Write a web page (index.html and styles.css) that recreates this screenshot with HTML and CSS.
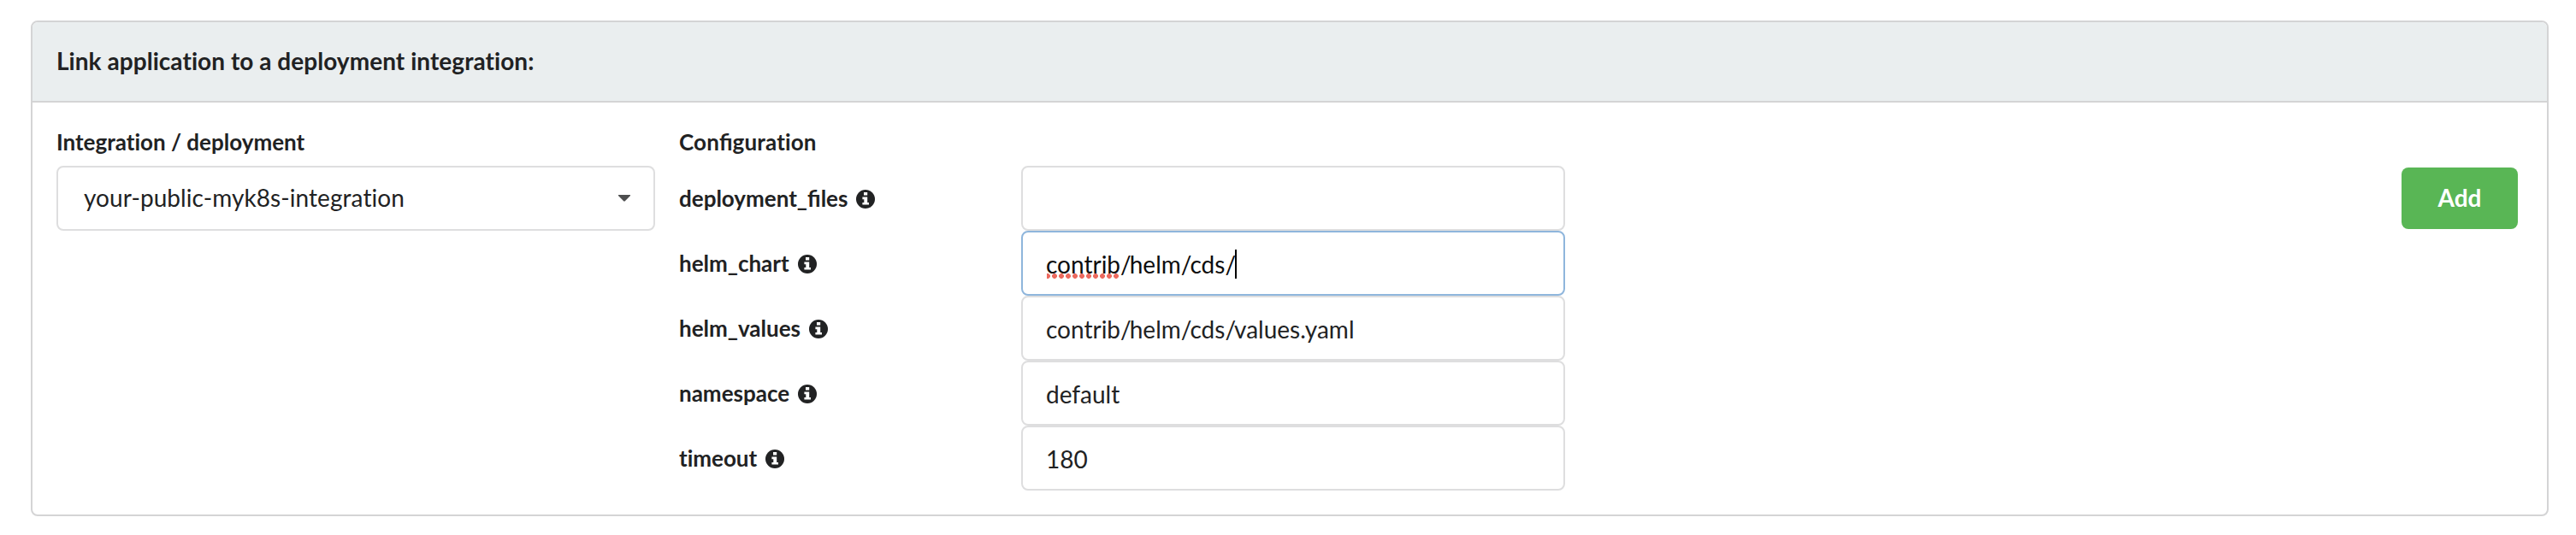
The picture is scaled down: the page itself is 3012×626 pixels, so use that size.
FILE: index.html
```
<!DOCTYPE html>
<html lang="en">
<head>
<meta charset="utf-8">
<title>Link application</title>
<link rel="stylesheet" href="styles.css">
</head>
<body>
<svg class="defs" width="0" height="0">
  <symbol id="info" viewBox="0 0 22 22">
    <circle cx="11" cy="11" r="11" fill="#212223"/>
    <path d="M9 3h4.2v3.6H9z M7.4 8.6h5.8v6.4h1.8v2.6H7.4V15h1.9v-3.8H7.4z" fill="#fff"/>
  </symbol>
</svg>
<section class="panel">
  <header class="panel-header">Link application to a deployment integration:</header>
  <div class="panel-body">
    <div class="integration">
      <div class="heading">Integration / deployment</div>
      <div class="select">
        <span>your-public-myk8s-integration</span>
        <svg class="arrow" viewBox="0 0 14 8"><path d="M0 0h14v1L7.6 7.6h-1.2L0 1z" fill="#4d4e4f"/></svg>
      </div>
    </div>
    <div class="configuration">
      <div class="heading wide">Con<span class="liga">fi</span>guration</div>
      <div class="row">
        <div class="label"><span>deployment_<span class="liga">fi</span>les</span><svg class="info"><use href="#info"/></svg></div>
        <div class="input"></div>
      </div>
      <div class="row">
        <div class="label">helm_chart<svg class="info"><use href="#info"/></svg></div>
        <div class="input focused"><span class="misspelled">contrib</span><span><i class="slash">/</i>helm<i class="slash">/</i>cds<i class="slash">/</i></span><span class="caret"></span></div>
      </div>
      <div class="row">
        <div class="label">helm_values<svg class="info"><use href="#info"/></svg></div>
        <div class="input"><span>contrib<i class="slash">/</i>helm<i class="slash">/</i>cds<i class="slash">/</i>values.yaml</span></div>
      </div>
      <div class="row">
        <div class="label">namespace<svg class="info"><use href="#info"/></svg></div>
        <div class="input">default</div>
      </div>
      <div class="row">
        <div class="label">timeout<svg class="info"><use href="#info"/></svg></div>
        <div class="input">180</div>
      </div>
    </div>
    <button class="add">Add</button>
  </div>
</section>
</body>
</html>
```
FILE: styles.css
```
* { box-sizing: border-box; }
body {
  margin: 0;
  padding: 24px 32px 22px 36px;
  background: #fff;
  color: #212223;
  font: 28px/34px Lato, "Liberation Sans", sans-serif;
  font-variant-ligatures: none;
}
.liga { font-variant-ligatures: normal; letter-spacing: 0; }
.defs { position: absolute; }
.panel {
  height: 580px;
  border: 2px solid #d4d4d5;
  border-radius: 8px;
  overflow: hidden;
}
.panel-header {
  height: 94px;
  padding: 28px;
  background: #eaeeef;
  border-bottom: 2px solid #d4d4d5;
  font-weight: 700;
  letter-spacing: 0.05px;
}
.panel-body {
  display: flex;
  align-items: flex-start;
  padding: 28px 34px 28px 28px;
}
.integration { width: 700px; margin-right: 28px; }
.configuration { width: 1036px; }
.heading {
  height: 46px;
  padding-top: 1px;
  font-size: 26px;
  font-weight: 700;
}
.wide { letter-spacing: 0.15px; }
.select {
  display: flex;
  align-items: center;
  justify-content: space-between;
  height: 76px;
  padding: 0 27px 2px 30px;
  border: 2px solid #dededf;
  border-radius: 8px;
  letter-spacing: 0.07px;
}
.arrow { width: 14px; height: 8px; margin-top: 2px; }
.row { display: flex; height: 76px; }
.label {
  display: flex;
  align-items: center;
  width: 400px;
  font-size: 26px;
  font-weight: 700;
}
.info { width: 22px; height: 22px; margin: 2px 0 0 10px; }
.input {
  display: flex;
  align-items: center;
  width: 636px;
  padding: 2px 27px 0;
  border: 2px solid #dededf;
  border-radius: 8px;
}
.slash { font-style: normal; letter-spacing: -2px; }
.focused { border-color: #8fb6dc; color: #0d0d0d; }
.misspelled { position: relative; }
.misspelled::after {
  content: "";
  position: absolute;
  left: 1px;
  top: 28px;
  width: 84px;
  height: 6px;
  background: radial-gradient(circle at 50% 50%, #ec6a5f 2.6px, transparent 3.2px) -3px 0 / 8px 6px repeat-x;
}
.caret { width: 2px; height: 34px; margin-left: 1px; background: #000; }
.add {
  width: 136px;
  height: 72px;
  margin: 48px 0 0 auto;
  padding: 0 0 2px;
  border: 0;
  border-radius: 8px;
  background: #59b655;
  color: #fff;
  font: 700 28px/34px Lato, "Liberation Sans", sans-serif;
}
```
